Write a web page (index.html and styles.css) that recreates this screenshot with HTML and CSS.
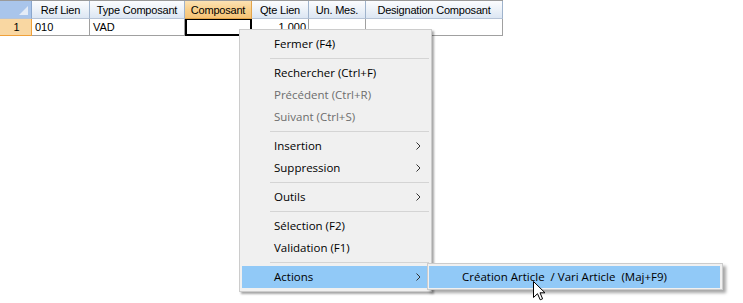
FILE: index.html
```html
<!DOCTYPE html>
<html>
<head>
<meta charset="utf-8">
<link rel="stylesheet" href="styles.css">
</head>
<body>
<div class="screen">
  <div class="grid">
    <div class="hd corner"><span class="tri"></span></div>
    <div class="hd">Ref Lien</div>
    <div class="hd">Type Composant</div>
    <div class="hd sel">Composant</div>
    <div class="hd">Qte Lien</div>
    <div class="hd">Un. Mes.</div>
    <div class="hd">Designation Composant</div>

    <div class="rh">1</div>
    <div class="cell">010</div>
    <div class="cell">VAD</div>
    <div class="cell current"></div>
    <div class="cell num">1.000</div>
    <div class="cell"></div>
    <div class="cell"></div>
  </div>

  <div class="menu">
    <div class="item">Fermer (F4)</div>
    <div class="sep"></div>
    <div class="item">Rechercher (Ctrl+F)</div>
    <div class="item dis">Précédent (Ctrl+R)</div>
    <div class="item dis">Suivant (Ctrl+S)</div>
    <div class="sep"></div>
    <div class="item sub">Insertion<svg class="chev" width="5" height="8" viewBox="0 0 5 8"><path d="M0.5 0.5 L4 4 L0.5 7.5" fill="none" stroke="#333" stroke-width="1"/></svg></div>
    <div class="item sub">Suppression<svg class="chev" width="5" height="8" viewBox="0 0 5 8"><path d="M0.5 0.5 L4 4 L0.5 7.5" fill="none" stroke="#333" stroke-width="1"/></svg></div>
    <div class="sep"></div>
    <div class="item sub">Outils<svg class="chev" width="5" height="8" viewBox="0 0 5 8"><path d="M0.5 0.5 L4 4 L0.5 7.5" fill="none" stroke="#333" stroke-width="1"/></svg></div>
    <div class="sep"></div>
    <div class="item">Sélection (F2)</div>
    <div class="item">Validation (F1)</div>
    <div class="sep"></div>
    <div class="item sub hot">Actions<svg class="chev" width="5" height="8" viewBox="0 0 5 8"><path d="M0.5 0.5 L4 4 L0.5 7.5" fill="none" stroke="#333" stroke-width="1"/></svg></div>
  </div>

  <div class="submenu">
    <div class="item hot wide">Création Article&nbsp; / Vari Article&nbsp; (Maj+F9)</div>
  </div>

  <svg class="cursor" width="13" height="20" viewBox="0 0 13 20">
    <path d="M0.5 0.5 L0.5 16.5 L4.5 12.7 L7.2 18.8 L9.6 17.8 L7 11.8 L12 11.8 Z" fill="#fff" stroke="#000" stroke-width="1" stroke-linejoin="miter"/>
  </svg>
</div>
</body>
</html>
```

FILE: styles.css
```css
html, body {
  margin: 0;
  padding: 0;
  background: #ffffff;
}

.screen {
  position: relative;
  width: 743px;
  height: 303px;
  overflow: hidden;
  background: #ffffff;
}

.grid {
  display: grid;
  grid-template-columns: 32px 58px 95px 67px 57px 57px 137px;
  grid-template-rows: 18px 17px;
  width: fit-content;
  border-top: 1px solid #9a9a9a;
  font-family: "Liberation Sans", Arial, sans-serif;
  font-size: 11px;
  color: #000;
}

.hd {
  box-sizing: border-box;
  background: linear-gradient(#fbfcfe 0%, #eef3f9 45%, #dce6f3 100%);
  border-right: 1px solid #9fb3cc;
  border-bottom: 1px solid #b6c3d6;
  display: flex;
  align-items: center;
  justify-content: center;
  padding-top: 1px;
  white-space: nowrap;
  letter-spacing: -0.2px;
}

.hd.sel {
  background: linear-gradient(#fce2b4 0%, #f9d08c 50%, #f6c377 100%);
  border-right-color: #e3a54c;
  border-bottom-color: #e3a54c;
}

.hd.corner {
  background: #a9c5eb;
  border-right-color: #8aa6cc;
  position: relative;
}

.tri {
  position: absolute;
  right: 3px;
  bottom: 3px;
  width: 0;
  height: 0;
  border-left: 9px solid transparent;
  border-bottom: 9px solid #e4ecf7;
}

.rh {
  box-sizing: border-box;
  background: #f9d7a2;
  border-right: 1px solid #f0a13a;
  border-bottom: 1px solid #f0a13a;
  display: flex;
  align-items: center;
  justify-content: center;
  padding-left: 2px;
}

.cell {
  box-sizing: border-box;
  background: #fff;
  border-right: 1px solid #a0a0a0;
  border-bottom: 1px solid #a0a0a0;
  display: flex;
  align-items: center;
  padding-left: 3px;
  white-space: nowrap;
}

.cell.num {
  justify-content: flex-end;
  padding-right: 2px;
  padding-left: 0;
}

.cell.current {
  border: 2px solid #000;
  border-top-width: 1px;
}

.menu {
  position: absolute;
  left: 239px;
  top: 29px;
  width: 193px;
  box-sizing: border-box;
  background: #f0f0f0;
  border: 1px solid #cccccc;
  padding: 3px 2px 3px 2px;
  box-shadow: 2px 2px 2px rgba(0, 0, 0, 0.35);
  font-family: "Open Sans", "Noto Sans", sans-serif;
  font-size: 11.5px;
  color: #000;
}

.item {
  box-sizing: border-box;
  height: 22px;
  display: flex;
  align-items: center;
  padding-left: 32px;
  padding-right: 8px;
  padding-bottom: 1px;
  white-space: nowrap;
}

.item.dis {
  color: #6d6d6d;
}

.item.sub {
  justify-content: space-between;
}

.item.hot {
  background: #91c9f7;
}

.chev {
  display: block;
}

.sep {
  height: 7px;
  margin-left: 28px;
  display: flex;
  align-items: center;
}

.sep::after {
  content: "";
  display: block;
  width: 100%;
  height: 1px;
  background: #d4d4d4;
}

.submenu {
  position: absolute;
  left: 427px;
  top: 263px;
  width: 296px;
  box-sizing: border-box;
  background: #f0f0f0;
  border: 1px solid #cccccc;
  padding: 2px 2px 1px 1px;
  box-shadow: 3px 3px 3px rgba(0, 0, 0, 0.35);
  font-family: "Open Sans", "Noto Sans", sans-serif;
  font-size: 11.5px;
}

.item.wide {
  padding-left: 33px;
}

.cursor {
  position: absolute;
  left: 533px;
  top: 281px;
}
```
